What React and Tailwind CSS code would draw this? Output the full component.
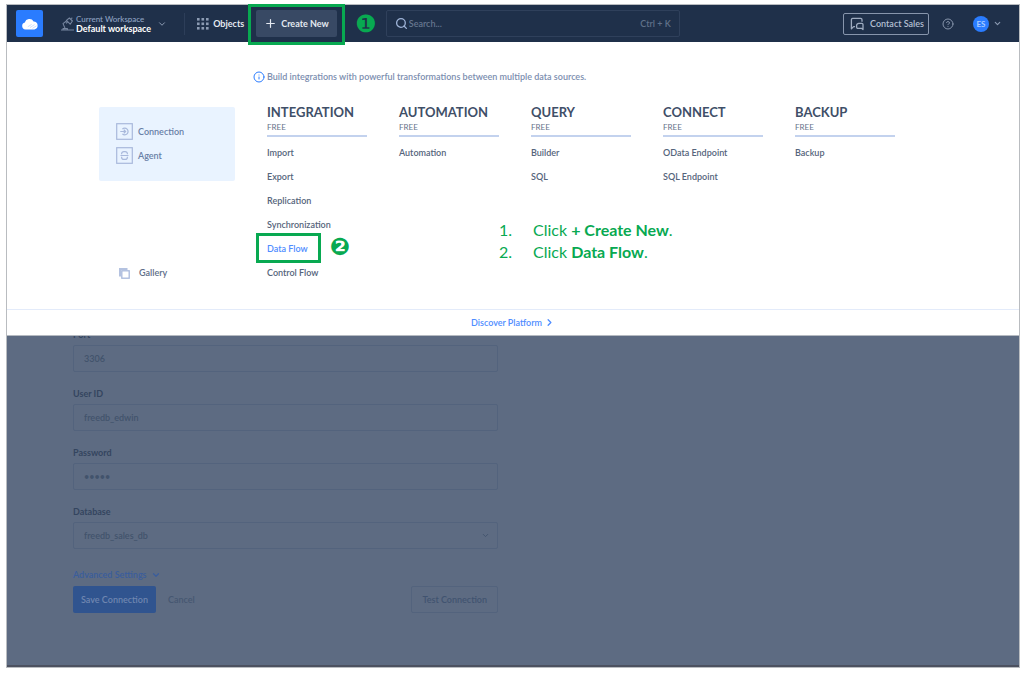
import React, { useState } from "react";
import {
  ChevronDown,
  ChevronRight,
  CircleHelp,
  Info,
  Plus,
  Search,
} from "lucide-react";

const menuColumns = [
  {
    title: "INTEGRATION",
    items: [
      "Import",
      "Export",
      "Replication",
      "Synchronization",
      "Data Flow",
      "Control Flow",
    ],
  },
  { title: "AUTOMATION", items: ["Automation"] },
  { title: "QUERY", items: ["Builder", "SQL"] },
  { title: "CONNECT", items: ["OData Endpoint", "SQL Endpoint"] },
  { title: "BACKUP", items: ["Backup"] },
];

const CloudLogo = () => (
  <svg width="18" height="14" viewBox="0 0 18 14">
    <path
      d="M4.4 12.5a3.5 3.5 0 0 1-.5-6.9A4.7 4.7 0 0 1 12.6 4.4a4.1 4.1 0 0 1 .8 8.1z"
      fill="#fff"
    />
    <path
      d="M9 10.6 13.6 7.6M11.4 11.4 15.6 8.8M6.8 9.8 10.6 7.4"
      stroke="#a9caff"
      strokeWidth=".6"
    />
  </svg>
);

const LampIcon = () => (
  <svg
    width="14"
    height="14"
    viewBox="0 0 14 14"
    fill="none"
    stroke="#7786a0"
    strokeWidth="1.1"
    strokeLinejoin="round"
    className="shrink-0"
  >
    <path d="M5.4 3.4 8.4 1l3 3-2.2 3.2z" />
    <path d="M5.8 3.8 2 6.6l2.2 5M0 13h13M2 12.8v-1.2h4.4v1.2" />
    <path d="m9.8 1.6 1.6-.6M6.6 5.2 5 6.2" />
  </svg>
);

const GridDots = () => (
  <svg width="12" height="12" viewBox="0 0 12 12" fill="#8c9bb3">
    {[0, 4.5, 9].map((y) =>
      [0, 4.5, 9].map((x) => (
        <rect key={`${x}-${y}`} x={x} y={y} width="2.6" height="2.6" />
      ))
    )}
  </svg>
);

const ChatIcon = () => (
  <svg
    width="14"
    height="14"
    viewBox="0 0 14 14"
    fill="none"
    stroke="#9eabc0"
    strokeWidth="1.3"
    strokeLinejoin="round"
  >
    <path d="M5 9.6H3.6L1.4 11.8V2.7a1.3 1.3 0 0 1 1.3-1.3h8A1.3 1.3 0 0 1 12 2.7v2" />
    <path d="M8.8 6.4h3A1.2 1.2 0 0 1 13 7.6v5l-1.5-1.3H7.8a1.2 1.2 0 0 1-1.2-1.2V8.6a2.2 2.2 0 0 1 2.2-2.2z" />
  </svg>
);

const ConnectionIcon = () => (
  <svg
    width="17"
    height="17"
    viewBox="0 0 17 17"
    fill="none"
    stroke="#a9b9dc"
    strokeWidth="1.2"
    className="shrink-0"
  >
    <rect x=".7" y=".7" width="15.6" height="15.6" />
    <path d="M6.4 6.2a3.3 3.3 0 1 1 0 4.6M4.3 8.5h5M7.8 6.8l1.8 1.7-1.8 1.7" />
  </svg>
);

const AgentIcon = () => (
  <svg
    width="17"
    height="17"
    viewBox="0 0 17 17"
    fill="none"
    stroke="#a9b9dc"
    strokeWidth="1.2"
    className="shrink-0"
  >
    <rect x=".7" y=".7" width="15.6" height="15.6" />
    <path d="M5.6 7.2V6.8a2.2 2.2 0 0 1 2.2-2.2h1.4a2.2 2.2 0 0 1 2.2 2.2v.4M5.6 9.8v.4a2.2 2.2 0 0 0 2.2 2.2h1.4a2.2 2.2 0 0 0 2.2-2.2v-.4M4.5 8.5h8" />
  </svg>
);

const GalleryIcon = () => (
  <svg width="11" height="11" viewBox="0 0 11 11" className="shrink-0">
    <path d="M0 0h8.5v2H2v6.5H0z" fill="#b4c2e0" />
    <rect
      x="2.8"
      y="2.8"
      width="7.4"
      height="7.4"
      fill="#fff"
      stroke="#a9b9dc"
      strokeWidth="1.3"
    />
  </svg>
);

const Header = () => (
  <header className="relative z-20 flex h-[37px] items-center bg-[#1f304a] pr-[17px] pl-[9px]">
    <a
      href="#"
      aria-label="Home"
      className="flex size-[27px] items-center justify-center rounded-xs bg-[#2a7cff]"
    >
      <CloudLogo />
    </a>
    <button className="ml-[18px] flex items-center text-left">
      <LampIcon />
      <span className="ml-px flex flex-col">
        <span className="text-[8px] leading-[10px] font-medium text-[#8fa3c4]">
          Current Workspace
        </span>
        <span className="text-[9px] leading-[10px] font-bold text-white">
          Default workspace
        </span>
      </span>
      <ChevronDown size={10} strokeWidth={2.4} className="ml-1.5 text-[#8c9bb3]" />
    </button>
    <span className="ml-[17px] h-[22px] w-px bg-[#2d3e59]" />
    <button className="ml-3 flex items-center gap-1 text-[9px] font-bold text-[#e4e9f1]">
      <GridDots />
      Objects
    </button>
    <div className="relative ml-3">
      <button className="flex h-[27px] items-center gap-1 rounded-xs bg-[#384964] px-2 text-[9px] font-bold whitespace-nowrap text-[#e4e9f1]">
        <Plus size={13} strokeWidth={2.2} />
        Create New
      </button>
      <span className="pointer-events-none absolute -inset-x-2 -top-1.5 -bottom-2 border-3 border-[#08a951]" />
    </div>
    <span className="ml-[17px] w-6 text-center font-['DejaVu_Sans',sans-serif] text-2xl leading-6 text-[#08a951]">
      ❶
    </span>
    <label className="ml-2 flex h-[27px] w-[294px] items-center gap-px rounded-xs border border-[#2f405b] px-2">
      <Search size={13} strokeWidth={2.4} className="text-[#9fb4d8]" />
      <input
        type="text"
        aria-label="Search"
        placeholder="Search..."
        className="w-0 flex-1 text-[9px] font-semibold text-white outline-none placeholder:text-[#66768f]"
      />
      <span className="text-[9px] font-semibold text-[#5f7089]">Ctrl + K</span>
    </label>
    <button className="ml-auto flex h-[22px] items-center gap-1.5 rounded-xs border border-[#8795ac] px-1 pl-1.5 text-[9px] font-semibold text-[#b3bfd1]">
      <ChatIcon />
      Contact Sales
    </button>
    <button aria-label="Help" className="ml-[13px] text-[#8795ac]">
      <CircleHelp size={12} />
    </button>
    <button className="ml-[19px] flex items-center gap-1 text-[#8c9bb3]">
      <span className="flex size-4 items-center justify-center rounded-full bg-[#2a7cff] text-[8px] font-bold text-[#a9cbff]">
        ES
      </span>
      <ChevronDown size={9} strokeWidth={3} />
    </button>
  </header>
);

const CreateMenu = () => (
  <section className="relative z-10 border-b border-[#b5bac1] bg-white">
    <div className="flex h-[267px] gap-8 pl-[92px]">
      <aside className="flex w-[136px] flex-col pt-[65px] text-[9px] font-semibold text-[#687ea6]">
        <div className="flex h-[74px] flex-col gap-[7px] rounded-xs bg-[#e9f3ff] pt-4 pl-[17px]">
          <a href="#" className="flex items-center gap-[5px]">
            <ConnectionIcon />
            Connection
          </a>
          <a href="#" className="flex items-center gap-[5px]">
            <AgentIcon />
            Agent
          </a>
        </div>
        <a
          href="#"
          className="mt-[84px] ml-5 flex items-center gap-[9px] leading-4 text-[#5d6d87]"
        >
          <GalleryIcon />
          Gallery
        </a>
      </aside>
      <div className="flex-1 pt-[27px]">
        <p className="-ml-3.5 flex items-center gap-0.5 text-[9px] leading-4 font-semibold text-[#7c8eaf]">
          <Info size={12} className="text-[#2a7cff]" />
          Build integrations with powerful transformations between multiple data
          sources.
        </p>
        <div className="mt-[18px] flex gap-8">
          {menuColumns.map((column) => (
            <div key={column.title} className="w-[100px]">
              <div className="border-b-2 border-[#c3d2ee] pb-0.5">
                <h2 className="text-[13px] leading-[18px] font-bold text-[#3f4f68]">
                  {column.title}
                </h2>
                <p className="text-[8px] leading-3 text-[#66738a]">FREE</p>
              </div>
              <ul className="mt-1 text-[9px] leading-6 font-semibold text-[#55647b]">
                {column.items.map((item) =>
                  item === "Data Flow" ? (
                    <li key={item} className="relative flex">
                      <a href="#" className="text-[#4f8dff]">
                        {item}
                      </a>
                      <span className="pointer-events-none absolute -top-1 -left-[11px] h-[30px] w-[65px] border-3 border-[#08a951]" />
                      <span className="absolute -top-0.5 left-[61px] w-6 text-center font-['DejaVu_Sans',sans-serif] text-2xl leading-6 text-[#08a951]">
                        ❷
                      </span>
                    </li>
                  ) : (
                    <li key={item}>
                      <a href="#">{item}</a>
                    </li>
                  )
                )}
              </ul>
            </div>
          ))}
        </div>
      </div>
    </div>
    <ol className="absolute top-[177px] left-[492px] text-base leading-[22px] text-[#08a951]">
      <li className="flex">
        <span className="w-[34px]">1.</span>
        <span>
          Click <b>+ Create New</b>.
        </span>
      </li>
      <li className="flex">
        <span className="w-[34px]">2.</span>
        <span>
          Click <b>Data Flow</b>.
        </span>
      </li>
    </ol>
    <div className="flex h-[26px] items-center justify-center border-t border-[#e3ebfa]">
      <a
        href="#"
        className="flex items-center gap-0.5 text-[9px] font-semibold text-[#4f8dff]"
      >
        Discover Platform
        <ChevronRight size={11} strokeWidth={2.8} />
      </a>
    </div>
  </section>
);

const fieldClass =
  "block h-[27px] w-full appearance-none rounded-xs border border-[#53637d] px-2.5 text-[9px] font-semibold text-[#42536c] outline-none";

const Field = ({ id, label, children }) => (
  <div className="mb-3.5">
    <label
      htmlFor={id}
      className="mb-0.5 block text-[9px] leading-4 font-bold text-[#34455f]"
    >
      {label}
    </label>
    {children}
  </div>
);

const ConnectionForm = () => {
  const [values, setValues] = useState({
    port: "3306",
    user: "freedb_edwin",
    password: "edwin",
  });

  const handleChange = (e) => {
    setValues((prev) => ({ ...prev, [e.target.id]: e.target.value }));
  };

  return (
    <form
      onSubmit={(e) => e.preventDefault()}
      className="-mt-[9px] ml-[66px] max-w-[425px]"
    >
      <Field id="port" label="Port">
        <input
          id="port"
          type="text"
          value={values.port}
          onChange={handleChange}
          className={fieldClass}
        />
      </Field>
      <Field id="user" label="User ID">
        <input
          id="user"
          type="text"
          value={values.user}
          onChange={handleChange}
          className={fieldClass}
        />
      </Field>
      <Field id="password" label="Password">
        <input
          id="password"
          type="password"
          value={values.password}
          onChange={handleChange}
          className={fieldClass}
        />
      </Field>
      <Field id="database" label="Database">
        <div className="relative">
          <select id="database" className={fieldClass}>
            <option>freedb_sales_db</option>
          </select>
          <ChevronDown
            size={9}
            strokeWidth={2.6}
            className="pointer-events-none absolute top-[9px] right-2 text-[#43546e]"
          />
        </div>
      </Field>
      <button
        type="button"
        className="mt-[18px] flex items-center gap-1 text-[9px] leading-4 font-semibold text-[#3a5d9c]"
      >
        Advanced Settings
        <ChevronDown size={10} strokeWidth={3} />
      </button>
      <div className="mt-[3px] flex h-[27px] items-center text-[9px] font-semibold">
        <button className="h-full rounded-xs bg-[#30548f] px-2 text-[#6f86b0]">
          Save Connection
        </button>
        <button type="button" className="ml-3 text-[#465771]">
          Cancel
        </button>
        <button
          type="button"
          className="ml-auto h-full rounded-xs border border-[#53637d] px-2.5 text-[#415370]"
        >
          Test Connection
        </button>
      </div>
    </form>
  );
};

const App = () => {
  return (
    <div className="min-h-screen bg-white pt-1 pr-1 pb-[5px] pl-1.5 font-['Lato',sans-serif]">
      <div className="border border-[#b9bcc0]">
        <Header />
        <CreateMenu />
        <main className="overflow-hidden border-b-2 border-[#4c5160] bg-[#5d6b82] pb-[52px]">
          <ConnectionForm />
        </main>
      </div>
    </div>
  );
};

export default App;
